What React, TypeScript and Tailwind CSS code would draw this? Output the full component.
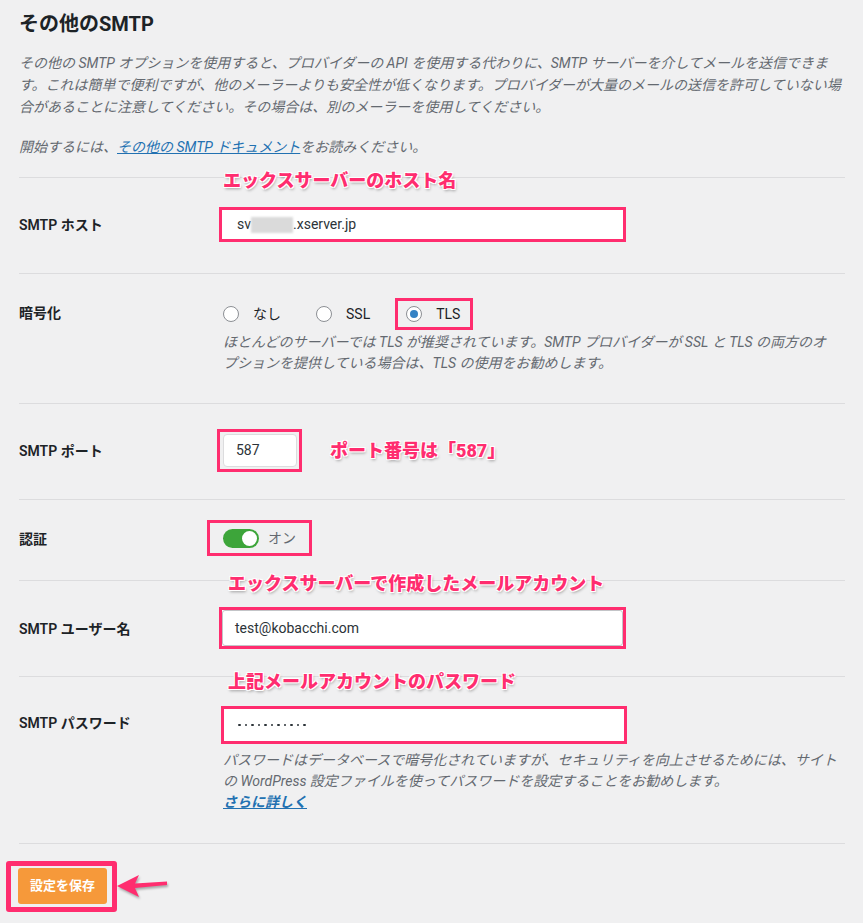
import React from 'react';

const annotation =
  'text-[18px] leading-[20px] font-black text-[#ff2d6f] whitespace-nowrap [text-shadow:0_0_2px_#fff,1px_1px_0_#fff,-1px_-1px_0_#fff,1px_-1px_0_#fff,-1px_1px_0_#fff,1px_2px_3px_rgba(0,0,0,0.35)]';

function Row({ label, labelPt, children }: { label: string; labelPt: string; children: React.ReactNode }) {
  return (
    <div className="flex border-t border-[#dcdcde]">
      <div className={`w-[204px] shrink-0 text-[14px] leading-[20px] font-semibold text-[#1d2327] ${labelPt}`}>{label}</div>
      <div className="flex-1 flex flex-col items-start">{children}</div>
    </div>
  );
}

function Radio({ label, checked }: { label: string; checked?: boolean }) {
  return (
    <div className="flex items-center gap-[14px]">
      <span className="w-4 h-4 rounded-full border border-[#8c8f94] bg-white flex items-center justify-center">
        {checked && <span className="w-2 h-2 rounded-full bg-[#3582c4]" />}
      </span>
      <span className="text-[14px] text-[#1d2327]">{label}</span>
    </div>
  );
}

export default function App() {
  return (
    <div
      className="min-h-[923px] bg-[#f0f0f1] pl-[19px] pr-[18px] pt-[10px] text-[#3c434a]"
      style={{ fontFamily: 'Roboto, "Noto Sans CJK JP", sans-serif' }}
    >
      <h2 className="text-[20px] leading-[28px] font-bold text-[#1d2327]">その他のSMTP</h2>

      <p className="mt-[14px] text-[14px] leading-[22px] italic text-[#646970] whitespace-nowrap">
        その他の SMTP オプションを使用すると、プロバイダーの API を使用する代わりに、SMTP サーバーを介してメールを送信できま
        <br />
        す。これは簡単で便利ですが、他のメーラーよりも安全性が低くなります。プロバイダーが大量のメールの送信を許可していない場
        <br />
        合があることに注意してください。その場合は、別のメーラーを使用してください。
      </p>
      <p className="mt-[18px] mb-[19px] text-[14px] leading-[22px] italic text-[#646970]">
        開始するには、
        <a href="#" className="text-[#2271b1] underline">
          その他の SMTP ドキュメント
        </a>
        をお読みください。
      </p>

      {/* host */}
      <Row label="SMTP ホスト" labelPt="pt-[37px]">
        <div className={`${annotation} -mt-[7px]`}>エックスサーバーのホスト名</div>
        <div className="mt-[16px] mb-[31px] -ml-[4px] w-[407px] h-[35px] border-[3px] border-[#ff2d6f] bg-white flex items-center pl-[15px] text-[14px] text-[#2c3338]">
          <span>sv</span>
          <span className="inline-block w-[42px] h-[16px] bg-[#dadada] blur-[1px]" />
          <span>.xserver.jp</span>
        </div>
      </Row>

      {/* encryption */}
      <Row label="暗号化" labelPt="pt-[29px]">
        <div className="mt-[24px] flex items-center h-[32px]">
          <Radio label="なし" />
          <div className="ml-[35px]">
            <Radio label="SSL" />
          </div>
          <div className="ml-[25px] h-[32px] border-[3px] border-[#ff2d6f] pl-[8px] pr-[10px] flex items-center">
            <Radio label="TLS" checked />
          </div>
        </div>
        <p className="mt-[2px] mb-[29px] text-[14px] leading-[21px] italic text-[#646970] whitespace-nowrap">
          ほとんどのサーバーでは TLS が推奨されています。SMTP プロバイダーが SSL と TLS の両方のオ
          <br />
          プションを提供している場合は、TLS の使用をお勧めします。
        </p>
      </Row>

      {/* port */}
      <Row label="SMTP ポート" labelPt="pt-[37px]">
        <div className="mt-[25px] mb-[27px] flex items-center">
          <div className="-ml-[6px] w-[85px] h-[43px] border-[3px] border-[#ff2d6f] pl-[3px] pr-[2px] py-[2px]">
            <div className="h-full rounded-[4px] border border-[#dcdcde] bg-white flex items-center pl-[12px] text-[14px] text-[#2c3338]">
              587
            </div>
          </div>
          <div className={`${annotation} ml-[28px]`}>ポート番号は「587」</div>
        </div>
      </Row>

      {/* auth */}
      <Row label="認証" labelPt="pt-[29px]">
        <div className="mt-[20px] mb-[24px] -ml-[16px] w-[105px] h-[36px] border-[3px] border-[#ff2d6f] pl-[13px] flex items-center gap-[9px]">
          <div className="w-[36px] h-[19px] rounded-full bg-[#3da53a] flex items-center justify-end pr-[2px]">
            <div className="w-[15px] h-[15px] rounded-full bg-white" />
          </div>
          <span className="text-[14px] text-[#646970]">オン</span>
        </div>
      </Row>

      {/* user */}
      <Row label="SMTP ユーザー名" labelPt="pt-[38px]">
        <div className={`${annotation} -mt-[7px] ml-[5px]`}>エックスサーバーで作成したメールアカウント</div>
        <div className="mt-[13px] mb-[27px] -ml-[4px] w-[407px] h-[42px] border-[3px] border-[#ff2d6f] bg-white">
          <div className="h-full border border-[#c3c4c7] rounded-[3px] flex items-center pl-[12px] text-[14px] text-[#2c3338]">
            test@kobacchi.com
          </div>
        </div>
      </Row>

      {/* password */}
      <Row label="SMTP パスワード" labelPt="pt-[36px]">
        <div className={`${annotation} -mt-[5px] ml-[5px]`}>上記メールアカウントのパスワード</div>
        <div className="mt-[14px] -ml-[2px] w-[406px] h-[38px] border-[3px] border-[#ff2d6f] bg-white flex items-center pl-[14px] gap-[4px]">
          {Array.from({ length: 11 }).map((_, i) => (
            <span key={i} className="w-[2.5px] h-[2.5px] rounded-full bg-[#2c3338]" />
          ))}
        </div>
        <p className="mt-[6px] text-[14px] leading-[21px] italic text-[#646970] whitespace-nowrap">
          パスワードはデータベースで暗号化されていますが、セキュリティを向上させるためには、サイト
          <br />
          の WordPress 設定ファイルを使ってパスワードを設定することをお勧めします。
        </p>
        <a href="#" className="mb-[31px] text-[14px] leading-[20px] italic font-bold text-[#2271b1] underline">
          さらに詳しく
        </a>
      </Row>

      {/* save */}
      <div className="border-t border-[#dcdcde] pt-[17px] flex items-center">
        <div className="-ml-[13px] w-[111px] h-[51px] border-[5px] border-[#ff2d6f] rounded-[3px] pl-[7px] pr-[5px] pt-[2px] pb-[3px]">
          <button className="w-full h-full rounded-[3px] bg-[#f6993a] text-white text-[13px] font-bold">設定を保存</button>
        </div>
        <svg width="52" height="26" viewBox="0 0 52 26" className="-ml-[1px] drop-shadow-[1px_2px_1px_rgba(0,0,0,0.3)]">
          <path d="M1 12 L23 1 L19 9.5 L51 7.5 L51 11 L19 14 L23 23 Z" fill="#ff2d6f" />
        </svg>
      </div>
    </div>
  );
}
